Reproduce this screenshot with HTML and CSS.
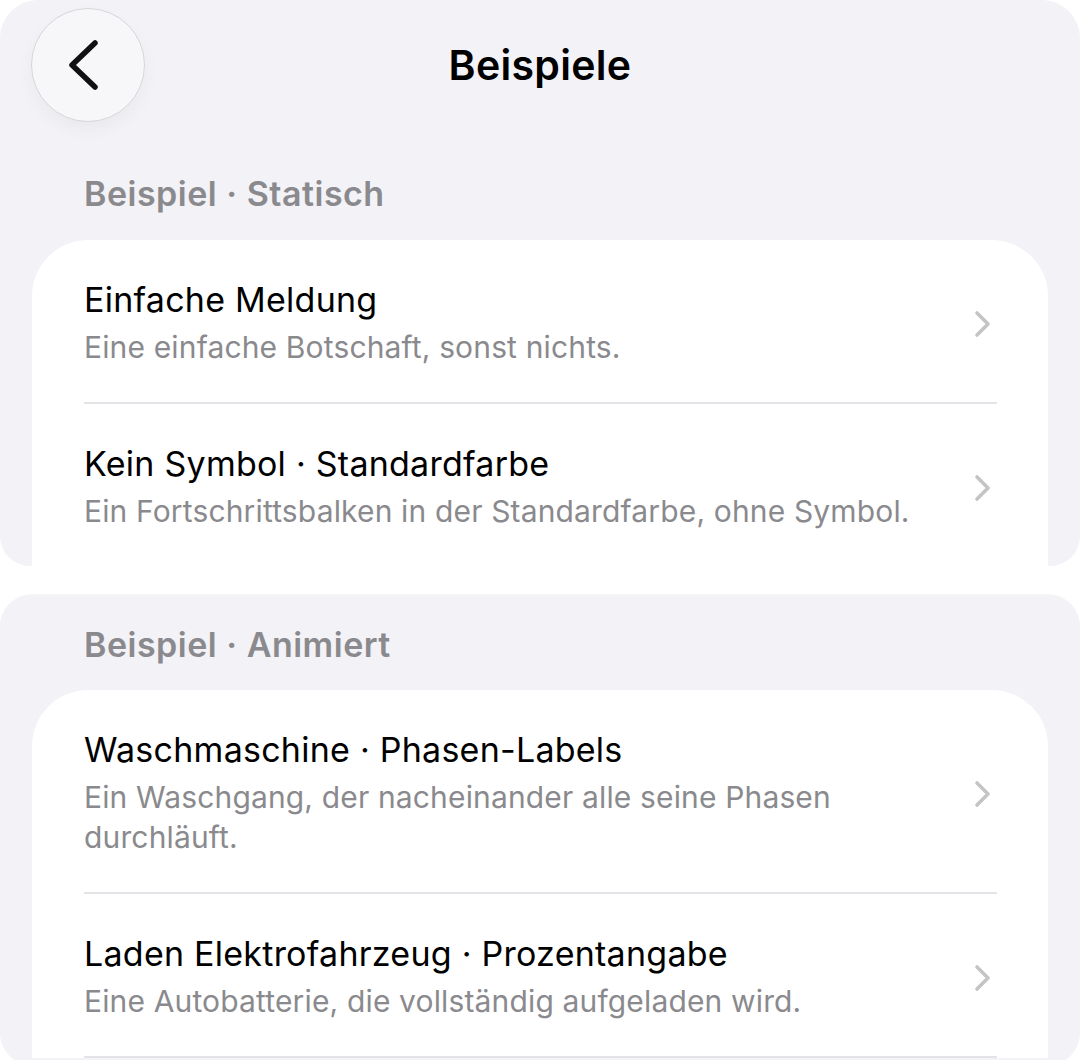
FILE: index.html
```html
<!DOCTYPE html>
<html lang="de">
<head>
    <meta charset="UTF-8">
    <meta name="viewport" content="width=device-width, initial-scale=1.0">
    <title>Beispiele</title>
    <link rel="stylesheet" href="styles.css">
</head>
<body>
    <div class="screen">
        <section class="sheet sheet-top">
            <header class="navbar">
                <button class="back-btn" aria-label="Zurück">
                    <svg width="34" height="52" viewBox="0 0 34 52">
                        <path d="M28 4 L5 26 L28 48" fill="none" stroke="#111" stroke-width="5.5" stroke-linecap="round" stroke-linejoin="round"/>
                    </svg>
                </button>
                <h1 class="nav-title">Beispiele</h1>
                <div></div>
            </header>

            <h2 class="section-title">Beispiel · Statisch</h2>

            <div class="list">
                <a class="row" href="#">
                    <div class="row-text">
                        <div class="row-title">Einfache Meldung</div>
                        <div class="row-sub">Eine einfache Botschaft, sonst nichts.</div>
                    </div>
                    <svg class="chevron" width="18" height="28" viewBox="0 0 18 28">
                        <path d="M3 3 L14 14 L3 25" fill="none" stroke="currentColor" stroke-width="3.6" stroke-linecap="round" stroke-linejoin="round"/>
                    </svg>
                </a>
                <a class="row" href="#">
                    <div class="row-text">
                        <div class="row-title">Kein Symbol · Standardfarbe</div>
                        <div class="row-sub">Ein Fortschrittsbalken in der Standardfarbe, ohne Symbol.</div>
                    </div>
                    <svg class="chevron" width="18" height="28" viewBox="0 0 18 28">
                        <path d="M3 3 L14 14 L3 25" fill="none" stroke="currentColor" stroke-width="3.6" stroke-linecap="round" stroke-linejoin="round"/>
                    </svg>
                </a>
            </div>
        </section>

        <section class="sheet sheet-bottom">
            <h2 class="section-title">Beispiel · Animiert</h2>

            <div class="list">
                <a class="row" href="#">
                    <div class="row-text">
                        <div class="row-title">Waschmaschine · Phasen-Labels</div>
                        <div class="row-sub">Ein Waschgang, der nacheinander alle seine Phasen durchläuft.</div>
                    </div>
                    <svg class="chevron" width="18" height="28" viewBox="0 0 18 28">
                        <path d="M3 3 L14 14 L3 25" fill="none" stroke="currentColor" stroke-width="3.6" stroke-linecap="round" stroke-linejoin="round"/>
                    </svg>
                </a>
                <a class="row" href="#">
                    <div class="row-text">
                        <div class="row-title">Laden Elektrofahrzeug · Prozentangabe</div>
                        <div class="row-sub">Eine Autobatterie, die vollständig aufgeladen wird.</div>
                    </div>
                    <svg class="chevron" width="18" height="28" viewBox="0 0 18 28">
                        <path d="M3 3 L14 14 L3 25" fill="none" stroke="currentColor" stroke-width="3.6" stroke-linecap="round" stroke-linejoin="round"/>
                    </svg>
                </a>
            </div>
        </section>
    </div>
</body>
</html>
```

FILE: styles.css
```css
* {
    margin: 0;
    padding: 0;
    box-sizing: border-box;
    font-family: Inter, "Noto Sans", sans-serif;
}

html, body {
    background: #ffffff;
    overflow: hidden;
}

.screen {
    height: 1060px;
    display: flex;
    flex-direction: column;
    gap: 29px;
}

.sheet {
    background: #f2f2f7;
    overflow: hidden;
    flex-shrink: 0;
}

.sheet-top {
    height: 566px;
    border-radius: 38px 38px 30px 30px;
}

.sheet-bottom {
    height: 470px;
    border-radius: 32px;
    box-shadow: 0 -1px 0 rgba(0, 0, 0, 0.035);
}

/* nav bar */
.navbar {
    display: grid;
    grid-template-columns: 1fr auto 1fr;
    align-items: center;
    padding: 8px 31px 0;
    height: 122px;
}

.back-btn {
    width: 114px;
    height: 114px;
    border-radius: 50%;
    border: 1px solid #d6d6da;
    background: #f7f7fa;
    box-shadow: 0 8px 18px rgba(0, 0, 0, 0.04);
    display: flex;
    align-items: center;
    justify-content: center;
    padding-right: 8px;
    cursor: pointer;
}

.nav-title {
    font-size: 41px;
    font-weight: 600;
    color: #000;
    letter-spacing: 0.3px;
}

/* section headers */
.section-title {
    font-size: 34px;
    font-weight: 600;
    color: #8a8a8e;
    padding: 0 0 0 84px;
    line-height: 40px;
    letter-spacing: 0.5px;
}

.sheet-top .section-title {
    margin-top: 52px;
    margin-bottom: 26px;
}

.sheet-bottom .section-title {
    margin-top: 30px;
    margin-bottom: 25px;
}

/* list card */
.list {
    background: #ffffff;
    margin: 0 32px;
    border-radius: 56px 56px 0 0;
    padding: 0 51px 0 52px;
}

.row {
    display: flex;
    align-items: center;
    gap: 24px;
    padding: 40px 0 35px;
    border-bottom: 2px solid #e4e4e8;
    text-decoration: none;
}

.row-text {
    flex: 1;
    padding-right: 20px;
}

.row-title {
    font-size: 34px;
    line-height: 40px;
    color: #000;
    margin-bottom: 7px;
    letter-spacing: 0.25px;
}

.row-sub {
    font-size: 30px;
    line-height: 40px;
    color: #8a8a8e;
    letter-spacing: 0.15px;
}

.chevron {
    color: #c4c4c7;
    margin-right: 5px;
    flex-shrink: 0;
}
```
